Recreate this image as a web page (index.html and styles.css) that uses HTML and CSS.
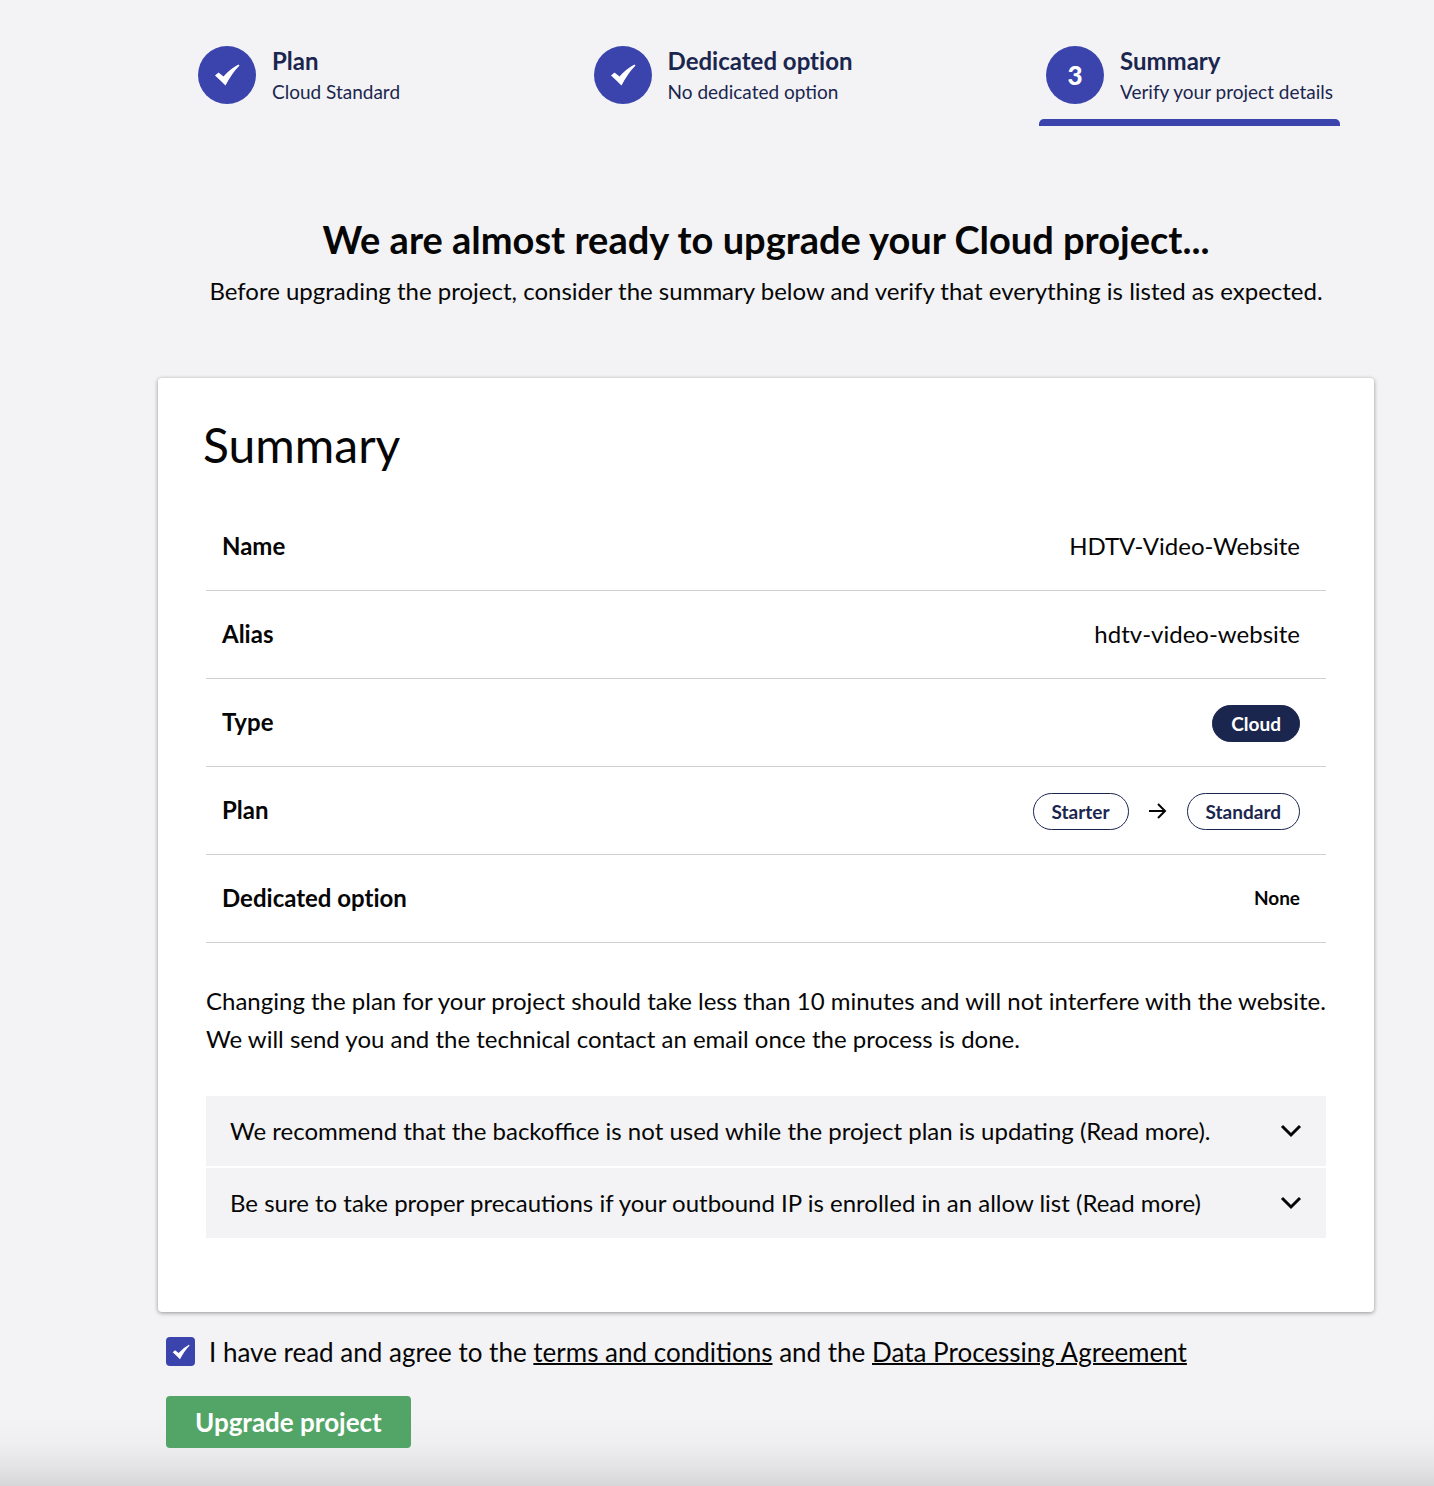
FILE: index.html
```html
<!DOCTYPE html>
<html lang="en">
<head>
<meta charset="utf-8">
<meta name="viewport" content="width=device-width, initial-scale=1">
<title>Upgrade project</title>
<link rel="stylesheet" href="styles.css">
</head>
<body>
<main class="page">
  <ol class="steps">
    <li class="step step-first">
      <span class="step-badge"><svg class="step-check" viewBox="0 0 26 22" aria-hidden="true"><path d="M1 11.500L4.500 8.500L9.500 12.500Q16 5 24.500 .5L25.500 1.500Q18 9 11.500 21.500Q6 16 1 11.500Z"/></svg></span>
      <span class="step-text"><strong class="step-title">Plan</strong><span class="step-note">Cloud Standard</span></span>
    </li>
    <li class="step">
      <span class="step-badge"><svg class="step-check" viewBox="0 0 26 22" aria-hidden="true"><path d="M1 11.500L4.500 8.500L9.500 12.500Q16 5 24.500 .5L25.500 1.500Q18 9 11.500 21.500Q6 16 1 11.500Z"/></svg></span>
      <span class="step-text"><strong class="step-title">Dedicated option</strong><span class="step-note">No dedicated option</span></span>
    </li>
    <li class="step step-current" aria-current="step">
      <span class="step-badge">3</span>
      <span class="step-text"><strong class="step-title">Summary</strong><span class="step-note">Verify your project details</span></span>
    </li>
  </ol>

  <header class="intro">
    <h1 class="intro-title">We are almost ready to upgrade your Cloud project...</h1>
    <p class="intro-text">Before upgrading the project, consider the summary below and verify that everything is listed as expected.</p>
  </header>

  <section class="card">
    <h2 class="card-title">Summary</h2>
    <div class="card-body">
      <table class="details">
        <tbody>
          <tr><th scope="row">Name</th><td>HDTV-Video-Website</td></tr>
          <tr><th scope="row">Alias</th><td>hdtv-video-website</td></tr>
          <tr><th scope="row">Type</th><td><span class="pill pill-solid">Cloud</span></td></tr>
          <tr><th scope="row">Plan</th><td><span class="plan-change"><span class="pill">Starter</span><svg class="arrow" viewBox="0 0 18 16" aria-hidden="true"><path d="M0 8H16M9 1L16 8L9 15"/></svg><span class="pill">Standard</span></span></td></tr>
          <tr><th scope="row">Dedicated option</th><td class="small-value">None</td></tr>
        </tbody>
      </table>
      <p class="card-text">Changing the plan for your project should take less than 10 minutes and will not interfere with the website. We will send you and the technical contact an email once the process is done.</p>
      <div class="notices">
        <button type="button" class="notice" aria-expanded="false"><span>We recommend that the backoffice is not used while the project plan is updating (Read more).</span><svg class="chevron" viewBox="0 0 22 14" aria-hidden="true"><path d="M2 2L11 11L20 2"/></svg></button>
        <button type="button" class="notice" aria-expanded="false"><span>Be sure to take proper precautions if your outbound IP is enrolled in an allow list (Read more)</span><svg class="chevron" viewBox="0 0 22 14" aria-hidden="true"><path d="M2 2L11 11L20 2"/></svg></button>
      </div>
    </div>
  </section>

  <form class="confirm">
    <div class="consent">
      <span class="consent-control">
        <input class="consent-box" type="checkbox" id="agree" checked>
        <svg class="consent-check" viewBox="0 0 26 22" aria-hidden="true"><path d="M1 11.500L4.500 8.500L9.500 12.500Q16 5 24.500 .5L25.500 1.500Q18 9 11.500 21.500Q6 16 1 11.500Z"/></svg>
      </span>
      <label for="agree">I have read and agree to the <a href="#terms">terms and conditions</a> and the <a href="#dpa">Data Processing Agreement</a></label>
    </div>
    <button type="button" class="submit">Upgrade project</button>
  </form>
</main>
</body>
</html>
```
FILE: styles.css
```css
* { box-sizing: border-box; }

body {
  margin: 0;
  min-height: 100vh;
  background: linear-gradient(to top, #d6d6d8, #e4e4e6 20px, #efeff1 42px, #f3f3f5 70px);
  color: #060606;
  font-family: Lato, sans-serif;
  font-size: 24px;
  line-height: 38px;
}

h1, h2, p, ol { margin: 0; padding: 0; }

.page { padding: 46px 60px 38px 158px; }

.steps {
  display: flex;
  justify-content: space-between;
  padding: 0 34px 0 40px;
  list-style: none;
}

.step {
  display: flex;
  gap: 16px;
  color: #1b264f;
}

.step-first { padding-right: 7px; }

.step-current {
  position: relative;
  padding: 0 7px 18px;
}

.step-current::after {
  content: "";
  position: absolute;
  right: 0;
  bottom: 0;
  left: 0;
  height: 7px;
  border-radius: 5px 5px 0 0;
  background: #3a44ac;
}

.step-badge {
  display: flex;
  align-items: center;
  justify-content: center;
  width: 58px;
  height: 58px;
  border-radius: 50%;
  background: #3a44ac;
  color: #fff;
  font-size: 26px;
  font-weight: 900;
}

.step-check { width: 26px; height: 22px; fill: #fff; }
.step-text { display: flex; flex-direction: column; }
.step-title { line-height: 30px; font-variant-ligatures: none; }
.step-note { font-size: 19px; line-height: 32px; }

.intro { padding: 88px 0 60px; text-align: center; }
.intro-title { font-size: 38px; line-height: 50px; }
.intro-text { line-height: 54px; }

.card {
  padding: 38px 45px 74px;
  border-radius: 4px;
  background: #fff;
  box-shadow: 0 1px 4px rgba(0, 0, 0, 0.4);
}

.card-title { font-size: 48px; font-weight: 400; line-height: 58px; }
.card-body { padding: 28px 3px 0; }

.details { width: 100%; border-collapse: collapse; }
.details th, .details td { height: 88px; padding: 0 26px 0 16px; border-bottom: 1px solid #d1d1d4; }
.details th { text-align: left; font-variant-ligatures: none; }
.details td { text-align: right; }
.details .small-value { font-size: 19px; font-weight: 700; }

.pill {
  display: inline-block;
  padding: 0 18px;
  border: 1px solid #1b264f;
  border-radius: 19px;
  color: #1b264f;
  font-size: 19px;
  font-weight: 700;
  line-height: 35px;
}

.pill-solid { background: #1b264f; color: #fff; }
.plan-change { display: inline-flex; align-items: center; gap: 20px; }
.arrow { width: 18px; height: 16px; fill: none; stroke: #060606; stroke-width: 2; }

.card-text { padding: 39px 0 38px; }

.notices { display: flex; flex-direction: column; gap: 2px; }

.notice {
  display: flex;
  align-items: center;
  justify-content: space-between;
  padding: 16px 24px;
  border: 0;
  background: #f3f3f5;
  color: inherit;
  font: inherit;
  text-align: left;
}

.chevron { width: 22px; height: 14px; fill: none; stroke: #060606; stroke-width: 3; }

.confirm { padding: 21px 8px 0; }
.consent { display: flex; align-items: center; gap: 14px; font-size: 26px; }
.consent a { color: inherit; text-decoration-thickness: 2px; }
.consent-control { display: grid; place-items: center; }
.consent-control > * { grid-area: 1 / 1; }

.consent-box {
  appearance: none;
  width: 29px;
  height: 29px;
  margin: 0;
  border-radius: 4px;
  background: #3a44ac;
}

.consent-check { display: none; width: 18px; height: 16px; fill: #fff; pointer-events: none; }
.consent-box:checked + .consent-check { display: block; }

.submit {
  margin-top: 25px;
  padding: 7px 29px;
  border: 0;
  border-radius: 4px;
  background: #53a567;
  color: #fff;
  font: inherit;
  font-size: 26px;
  font-weight: 700;
}
```
